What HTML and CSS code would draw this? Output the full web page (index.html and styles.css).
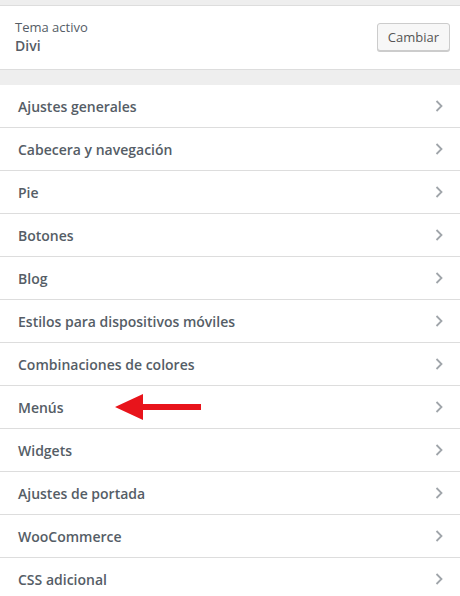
FILE: index.html
```html
<!DOCTYPE html>
<html lang="es">
<head>
    <meta charset="UTF-8">
    <title>Personalizar</title>
    <link rel="stylesheet" href="styles.css">
</head>
<body>
    <div class="panel">
        <div class="theme">
            <div class="theme-info">
                <span class="theme-label">Tema activo</span>
                <span class="theme-name">Divi</span>
            </div>
            <button class="change">Cambiar</button>
        </div>

        <ul class="sections">
            <li><span>Ajustes generales</span><svg class="chev" viewBox="0 0 8 12"><polyline points="1.5,1 6.5,6 1.5,11"/></svg></li>
            <li><span>Cabecera y navegación</span><svg class="chev" viewBox="0 0 8 12"><polyline points="1.5,1 6.5,6 1.5,11"/></svg></li>
            <li><span>Pie</span><svg class="chev" viewBox="0 0 8 12"><polyline points="1.5,1 6.5,6 1.5,11"/></svg></li>
            <li><span>Botones</span><svg class="chev" viewBox="0 0 8 12"><polyline points="1.5,1 6.5,6 1.5,11"/></svg></li>
            <li><span>Blog</span><svg class="chev" viewBox="0 0 8 12"><polyline points="1.5,1 6.5,6 1.5,11"/></svg></li>
            <li><span>Estilos para dispositivos móviles</span><svg class="chev" viewBox="0 0 8 12"><polyline points="1.5,1 6.5,6 1.5,11"/></svg></li>
            <li><span>Combinaciones de colores</span><svg class="chev" viewBox="0 0 8 12"><polyline points="1.5,1 6.5,6 1.5,11"/></svg></li>
            <li class="marked">
                <span>Menús</span>
                <!-- flecha roja de anotación -->
                <svg class="pointer" viewBox="0 0 88 30"><polygon points="0,15 28,2 28,12 86,12 86,18 28,18 28,28" /></svg>
                <svg class="chev" viewBox="0 0 8 12"><polyline points="1.5,1 6.5,6 1.5,11"/></svg>
            </li>
            <li><span>Widgets</span><svg class="chev" viewBox="0 0 8 12"><polyline points="1.5,1 6.5,6 1.5,11"/></svg></li>
            <li><span>Ajustes de portada</span><svg class="chev" viewBox="0 0 8 12"><polyline points="1.5,1 6.5,6 1.5,11"/></svg></li>
            <li><span>WooCommerce</span><svg class="chev" viewBox="0 0 8 12"><polyline points="1.5,1 6.5,6 1.5,11"/></svg></li>
            <li><span>CSS adicional</span><svg class="chev" viewBox="0 0 8 12"><polyline points="1.5,1 6.5,6 1.5,11"/></svg></li>
        </ul>
    </div>
</body>
</html>
```

FILE: styles.css
```css
body {
    margin: 0;
    background-color: #eee;
    font-family: "Open Sans", "Noto Sans", sans-serif;
    color: #555d66;
}

.panel {
    padding-top: 5px;
}

.theme {
    display: flex;
    justify-content: space-between;
    align-items: center;
    height: 63px;
    padding: 0 10px 0 15px;
    background-color: #fff;
    border-top: 1px solid #ddd;
    border-bottom: 1px solid #ddd;
}

.theme-info {
    display: flex;
    flex-direction: column;
    margin-top: -2px;
}

.theme-label {
    font-size: 13px;
    line-height: 17px;
}

.theme-name {
    font-size: 14px;
    font-weight: 600;
    line-height: 19px;
}

.change {
    height: 28px;
    padding: 0 10px;
    font-family: inherit;
    font-size: 13px;
    color: #555;
    background-color: #f7f7f7;
    border: 1px solid #ccc;
    border-radius: 3px;
    box-shadow: 0 1px 0 #ccc;
    margin-top: -2px;
}

.sections {
    list-style: none;
    margin: 15px 0 0;
    padding: 0;
    background-color: #fff;
}

.sections li {
    display: flex;
    align-items: center;
    height: 42px;
    padding: 0 17px 0 18px;
    border-bottom: 1px solid #ddd;
    font-size: 14px;
    font-weight: 600;
}

.sections li span {
    flex: 1;
}

.chev {
    width: 8px;
    height: 12px;
    fill: none;
    stroke: #a0a5aa;
    stroke-width: 1.8;
}

.sections .marked span {
    flex: 0 0 auto;
}

.pointer {
    width: 88px;
    height: 30px;
    margin-left: 51px;
    margin-right: auto;
    fill: #e8141b;
}
```
